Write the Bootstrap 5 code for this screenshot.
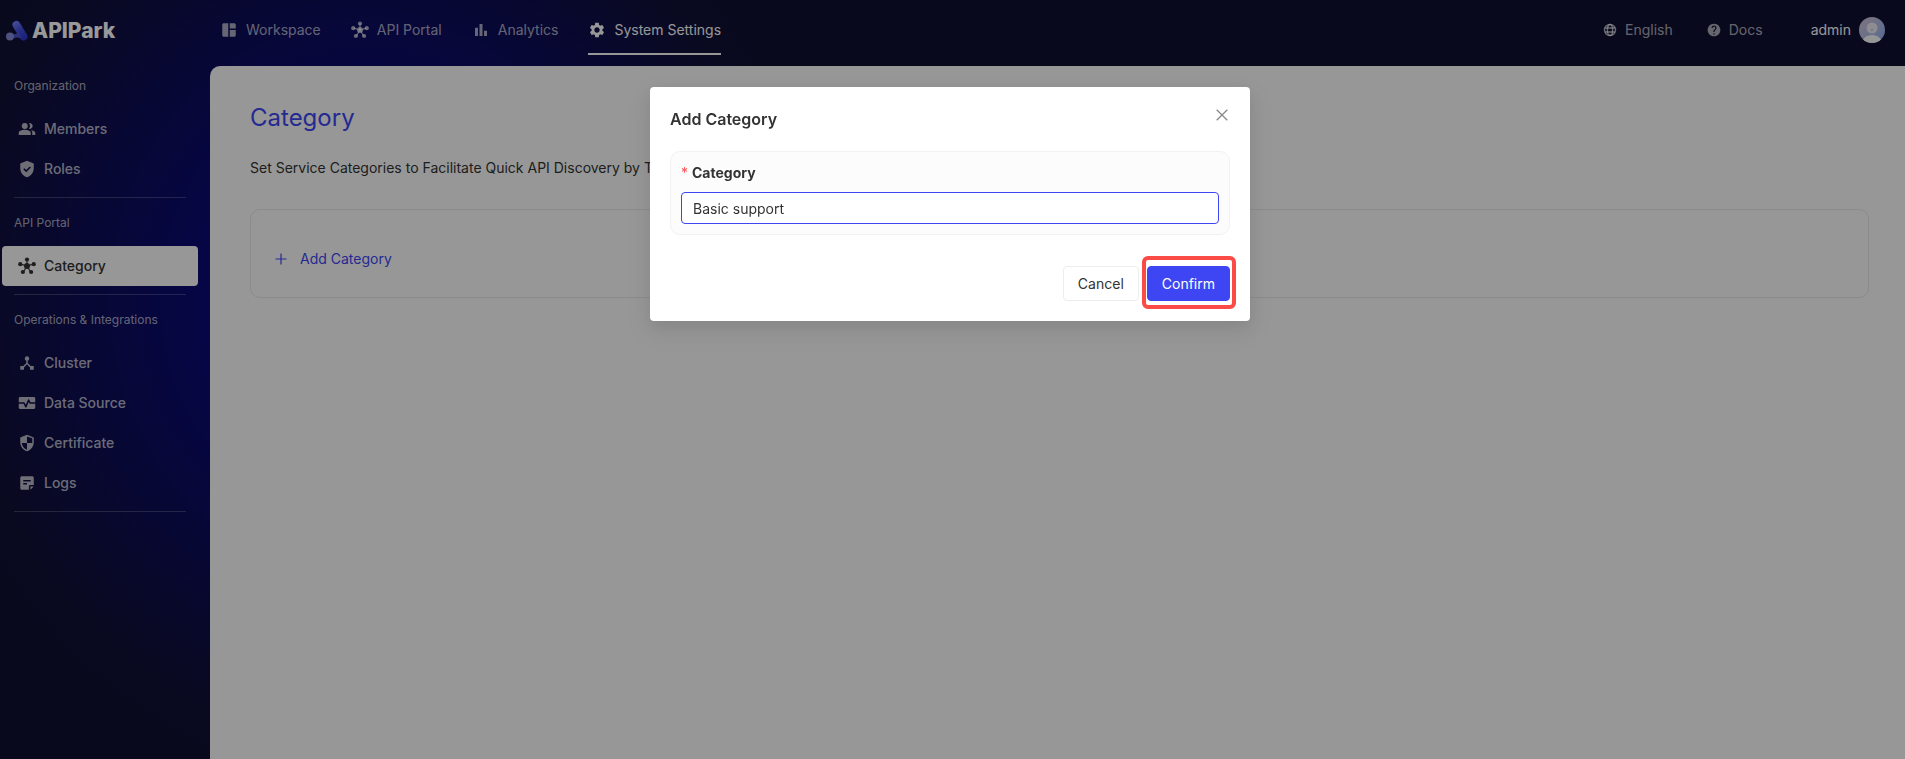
<!DOCTYPE html>
<html lang="en">
<head>
<meta charset="utf-8">
<meta name="viewport" content="width=device-width, initial-scale=1">
<title>APIPark - Category</title>
<link href="https://cdn.jsdelivr.net/npm/bootstrap@5.3.0/dist/css/bootstrap.min.css" rel="stylesheet">
<style>
  :root { --brand: #3d46f2; --ink: #333; --panel: #fcfcfc; }
  body { font-family: Inter, "Liberation Sans", sans-serif; font-size: 14px; line-height: 20px; color: var(--ink); }
  .shell { background: radial-gradient(440px 480px at 370px 300px, #0a0a80 0, #0a0a78 36%, #101034 95%, #101032 110%); }
  .shell a { text-decoration: none; }
  .sidebar { width: 210px; }
  .logo-row { height: 61px; padding: 0 0 0 5px; gap: 3px; font-size: 21px; font-weight: 800; color: #fff; }
  .group-label { font-size: 12px; padding: 15px 14px 13px; color: rgba(255,255,255,.65); }
  .side-link { height: 40px; margin: 0 12px 0 2px; padding: 0 16px; gap: 8px; border-radius: 4px; font-weight: 500; color: rgba(255,255,255,.7); }
  .side-link.active { background: var(--panel); color: var(--ink); }
  .rule { border-top: 1px solid rgba(255,255,255,.2); margin: 8px 24px 0 14px; }
  .topbar { height: 66px; padding: 0 20px 0 10px; }
  .top-links { gap: 30px; }
  .top-link { gap: 8px; height: 50px; border-bottom: 2px solid transparent; color: rgba(255,255,255,.65); padding: 5px 0 4px; margin-top: 5px; }
  .top-link.active { color: var(--panel); border-color: var(--panel); }
  .tools { gap: 34px; margin-top: -6px; color: rgba(255,255,255,.65); }
  .tools .tool { gap: 8px; color: inherit; background: none; border: 0; padding: 0; }
  .tools .user { color: var(--panel); margin-left: 14px; }
  .ico { width: 18px; height: 18px; fill: currentColor; flex: none; }
  .ico-sm { width: 14px; height: 14px; }
  .content { background: var(--panel); border-top-left-radius: 10px; padding: 36px 36px 40px 40px; }
  .page-title { font-size: 24px; line-height: 32px; font-weight: 400; color: var(--brand); margin: 0 0 24px; }
  .tree-box { border: 1px solid #e8e8e8; border-radius: 10px; margin-top: 31px; padding: 39px 24px 28px; }
  .add-link { color: var(--brand); background: none; border: 0; padding: 0; gap: 13px; }
  .modal-backdrop { --bs-backdrop-opacity: .4; }
  .modal { padding-right: 5px; }
  .modal-dialog { --bs-modal-width: 600px; margin-top: 87px; }
  .modal-content { border: 0; border-radius: 4px; padding: 20px; color: var(--ink); box-shadow: 0 6px 16px rgba(0,0,0,.08), 0 9px 28px 8px rgba(0,0,0,.05); }
  .modal-head { height: 24px; margin-bottom: 20px; }
  .modal-head h2 { font-size: 16px; line-height: 24px; font-weight: 600; margin: 0; }
  .close-btn { border: 0; background: none; color: #888; padding: 0 2px 10px; line-height: 1; }
  .field-box { background: #fcfcfc; border: 1px solid #f2f2f2; border-radius: 10px; padding: 10px; }
  .field-box label { font-weight: 700; line-height: 22px; margin-bottom: 8px; }
  .req { color: #ff4d4f; font-weight: 400; margin-right: 4px; }
  .field-box .form-control { height: 32px; font-size: 14px; line-height: 20px; padding: 5px 11px; border: 1px solid var(--brand); border-radius: 4px; color: var(--ink); box-shadow: none; }
  .modal-actions { gap: 8px; margin-top: 31px; }
  .modal-actions .btn { height: 35px; padding: 0 14px; font-size: 14px; border-radius: 4px; }
  .btn-plain { border: 1px solid #ededed; color: var(--ink); background: #fff; }
  .btn-brand { background: var(--brand); border-color: var(--brand); color: #fff; outline: 0; }
  .marked { position: relative; }
  .marked::after { content: ""; position: absolute; inset: -11px -7px -9px -6px; border: 4px solid #fa4b46; border-radius: 6px; pointer-events: none; }
</style>
</head>
<body>
<svg class="d-none" aria-hidden="true">
  <symbol id="i-hub" viewBox="0 0 24 24"><g stroke="currentColor" stroke-width="1.6"><path d="M12 12V3.5M12 12L3.5 9.5M12 12l8.500-2.500M12 12l-5 8M12 12l5 8"/></g><circle cx="12" cy="12" r="4"/><circle cx="12" cy="3.300" r="2.800"/><circle cx="3" cy="9.500" r="2.800"/><circle cx="21" cy="9.500" r="2.800"/><circle cx="6.500" cy="20" r="2.800"/><circle cx="17.500" cy="20" r="2.800"/></symbol>
  <symbol id="i-board" viewBox="0 0 24 24"><path d="M11 21H5c-1.100 0-2-.9-2-2V5c0-1.100.9-2 2-2h6v18zm2 0h6c1.100 0 2-.9 2-2v-7h-8v9zm8-11V5c0-1.100-.9-2-2-2h-6v7h8z"/></symbol>
  <symbol id="i-bars" viewBox="0 0 24 24"><path d="M4 9h4v11H4zM10 4h4v16h-4zM16 13h4v7h-4z"/></symbol>
  <symbol id="i-gear" viewBox="0 0 24 24"><path d="M19.140 12.940c.04-.3.06-.61.06-.94 0-.32-.02-.64-.07-.94l2.030-1.580c.18-.14.23-.41.12-.61l-1.920-3.320c-.12-.22-.37-.29-.59-.22l-2.390.96c-.5-.38-1.030-.7-1.620-.94l-.36-2.540c-.04-.24-.24-.41-.48-.41h-3.840c-.24 0-.43.17-.47.41l-.36 2.540c-.59.24-1.130.57-1.620.94l-2.390-.96c-.22-.08-.47 0-.59.22L2.740 8.870c-.12.21-.08.47.12.61l2.030 1.580c-.05.3-.09.63-.09.94s.02.64.07.94l-2.030 1.580c-.18.14-.23.41-.12.61l1.920 3.320c.12.22.37.29.59.22l2.390-.96c.5.38 1.030.7 1.620.94l.36 2.540c.05.24.24.41.48.41h3.840c.24 0 .44-.17.47-.41l.36-2.540c.59-.24 1.130-.56 1.620-.94l2.390.96c.22.08.47 0 .59-.22l1.920-3.320c.12-.22.07-.47-.12-.61l-2.010-1.580zM12 15.600c-1.980 0-3.600-1.620-3.600-3.600s1.620-3.600 3.600-3.600 3.600 1.620 3.600 3.600-1.620 3.600-3.600 3.600z"/></symbol>
  <symbol id="i-people" viewBox="0 0 24 24"><circle cx="9" cy="8" r="4"/><path d="M1 20v-2.800c0-1.200.6-2.100 1.600-2.600C4.500 13.600 6.700 13 9 13s4.500.6 6.400 1.600c1 .5 1.600 1.400 1.600 2.600V20zM14.500 11.900c1-1 1.500-2.400 1.500-3.900s-.5-2.800-1.500-3.900c.3-.1.7-.1 1-.1 2.200 0 4 1.800 4 4s-1.800 4-4 4c-.3 0-.7 0-1-.1zM19 20v-3c0-1.400-.7-2.700-2-3.700 1.500.2 2.800.7 4 1.300 1.300.7 2 1.500 2 2.400v3z"/></symbol>
  <symbol id="i-check" viewBox="0 0 24 24"><path fill-rule="evenodd" d="M12 1l9 3.500V11c0 5.500-3.800 10.700-9 12-5.200-1.300-9-6.500-9-12V4.500zM10.900 16.300l6.300-6.300-1.500-1.500-4.800 4.800-2.400-2.400L7 12.400z"/></symbol>
  <symbol id="i-tree" viewBox="0 0 24 24"><path d="M17 16l-4-4V8.820A3 3 0 1 0 11 8.820V12l-4 4H3v5h5v-3.050l4-4.200 4 4.200V21h5v-5z"/></symbol>
  <symbol id="i-pulse" viewBox="0 0 24 24"><path d="M15.100 7.600a1 1 0 0 0-1.800 0l-2.900 6.800-1.500-2.800a1 1 0 0 0-.9-.6H1V6c0-1.100.9-2 2-2h18c1.100 0 2 .9 2 2v5h-6.400z"/><path d="M23 13v5c0 1.100-.9 2-2 2H3c-1.100 0-2-.9-2-2v-5h6.400l2.200 4.500a1 1 0 0 0 1.800 0l2.900-6.700.8 1.600c.2.400.5.600.9.600z"/></symbol>
  <symbol id="i-shield" viewBox="0 0 24 24"><path fill-rule="evenodd" d="M12 1l9 3.500V11c0 5.500-3.800 10.700-9 12-5.200-1.300-9-6.500-9-12V4.500zM12 3.200V12H5c.5 4.100 3.300 7.800 7 8.900V12h7V5.800z"/></symbol>
  <symbol id="i-note" viewBox="0 0 24 24"><path fill-rule="evenodd" d="M19 3H5c-1.100 0-2 .9-2 2v14c0 1.100.9 2 2 2h9.500v-4.500c0-1.100.9-2 2-2H21V5c0-1.100-.9-2-2-2zM7 8h10v2H7zM7 12h5v2H7z"/><path d="M16.500 21v-4.500H21z"/></symbol>
  <symbol id="i-globe" viewBox="0 0 24 24"><g fill="none" stroke="currentColor" stroke-width="2.400"><circle cx="12" cy="12" r="9.500"/><ellipse cx="12" cy="12" rx="4.500" ry="9.500"/><path d="M3.500 8.500h17M3.500 15.500h17"/></g></symbol>
  <symbol id="i-help" viewBox="1 1 22 22"><path d="M12 2C6.480 2 2 6.480 2 12s4.480 10 10 10 10-4.480 10-10S17.520 2 12 2zm1 17h-2v-2h2v2zm2.070-7.750l-.9.920C13.450 12.900 13 13.500 13 15h-2v-.5c0-1.100.45-2.100 1.170-2.830l1.240-1.260c.37-.36.59-.86.59-1.410 0-1.100-.9-2-2-2s-2 .9-2 2H8c0-2.210 1.790-4 4-4s4 1.790 4 4c0 .88-.36 1.680-.93 2.250z"/></symbol>
</svg>

<div class="shell d-flex min-vh-100">
  <aside class="sidebar flex-shrink-0">
    <div class="logo-row d-flex align-items-center">
      <svg width="24" height="24" viewBox="0 0 24 24" aria-hidden="true">
        <defs><linearGradient id="lg" gradientUnits="userSpaceOnUse" x1="8" y1="2" x2="22" y2="22"><stop offset="0" stop-color="#7c86ff"/><stop offset=".5" stop-color="#3f4bdc"/><stop offset="1" stop-color="#2430c8"/></linearGradient></defs>
        <path d="M11.500 6L18.500 17.500" stroke="url(#lg)" stroke-width="8" stroke-linecap="round"/>
        <path d="M6 16q5-.3 8-3l2 6q-5-1.500-10 1z" fill="#4c54cf"/>
        <circle cx="5" cy="17.500" r="4" fill="#8487d2"/>
      </svg>
      <span>APIPark</span>
    </div>
    <nav aria-label="Settings">
      <div class="group-label">Organization</div>
      <a href="#" class="side-link d-flex align-items-center"><svg class="ico"><use href="#i-people"/></svg>Members</a>
      <a href="#" class="side-link d-flex align-items-center"><svg class="ico"><use href="#i-check"/></svg>Roles</a>
      <div class="rule"></div>
      <div class="group-label">API Portal</div>
      <a href="#" class="side-link active d-flex align-items-center"><svg class="ico"><use href="#i-hub"/></svg>Category</a>
      <div class="rule"></div>
      <div class="group-label">Operations &amp; Integrations</div>
      <a href="#" class="side-link d-flex align-items-center"><svg class="ico"><use href="#i-tree"/></svg>Cluster</a>
      <a href="#" class="side-link d-flex align-items-center"><svg class="ico"><use href="#i-pulse"/></svg>Data Source</a>
      <a href="#" class="side-link d-flex align-items-center"><svg class="ico"><use href="#i-shield"/></svg>Certificate</a>
      <a href="#" class="side-link d-flex align-items-center"><svg class="ico"><use href="#i-note"/></svg>Logs</a>
      <div class="rule"></div>
    </nav>
  </aside>

  <div class="d-flex flex-column flex-grow-1">
    <header class="topbar d-flex justify-content-between align-items-center">
      <nav class="top-links d-flex align-self-start" aria-label="Main">
        <a href="#" class="top-link d-flex align-items-center"><svg class="ico"><use href="#i-board"/></svg>Workspace</a>
        <a href="#" class="top-link d-flex align-items-center"><svg class="ico"><use href="#i-hub"/></svg>API Portal</a>
        <a href="#" class="top-link d-flex align-items-center"><svg class="ico"><use href="#i-bars"/></svg>Analytics</a>
        <a href="#" class="top-link active d-flex align-items-center"><svg class="ico"><use href="#i-gear"/></svg>System Settings</a>
      </nav>
      <div class="tools d-flex align-items-center">
        <button type="button" class="tool d-flex align-items-center"><svg class="ico ico-sm"><use href="#i-globe"/></svg>English</button>
        <a href="#" class="tool d-flex align-items-center"><svg class="ico ico-sm"><use href="#i-help"/></svg>Docs</a>
        <button type="button" class="tool user d-flex align-items-center">admin
          <svg width="26" height="26" viewBox="0 0 26 26" aria-hidden="true">
            <defs><linearGradient id="av" x1="0" y1="0" x2="1" y2="1"><stop offset=".2" stop-color="#c8c0d8"/><stop offset="1" stop-color="#8fb0f8"/></linearGradient><clipPath id="cp"><circle cx="13" cy="13" r="13"/></clipPath></defs>
            <g clip-path="url(#cp)"><rect width="26" height="26" fill="url(#av)"/><circle cx="13" cy="11" r="5.500" fill="#ececf2"/><ellipse cx="13" cy="25" rx="9.500" ry="7" fill="#fafafa"/><path d="M11.500 12.500h3L13 14z" fill="#9a9ccf"/></g>
          </svg>
        </button>
      </div>
    </header>
    <main class="content flex-grow-1">
      <h1 class="page-title">Category</h1>
      <div>Set Service Categories to Facilitate Quick API Discovery by Team</div>
      <div class="tree-box">
        <button type="button" class="add-link d-flex align-items-center">
          <svg width="12" height="12" viewBox="0 0 12 12" stroke="currentColor" stroke-width="1.200" aria-hidden="true"><path d="M6 .5v11M.5 6h11"/></svg>Add Category
        </button>
      </div>
    </main>
  </div>
</div>

<div class="modal-backdrop show"></div>
<div class="modal d-block" role="dialog" aria-modal="true" aria-labelledby="dlg-title">
  <div class="modal-dialog">
    <form class="modal-content">
      <div class="modal-head d-flex justify-content-between align-items-center">
        <h2 id="dlg-title">Add Category</h2>
        <button type="button" class="close-btn" aria-label="Close"><svg width="12" height="12" viewBox="0 0 12 12" stroke="currentColor" stroke-width="1.300"><path d="M.7.7l10.600 10.600M11.300.7L.7 11.300"/></svg></button>
      </div>
      <div class="field-box">
        <label for="cat" class="d-block"><span class="req">*</span>Category</label>
        <input id="cat" type="text" class="form-control" value="Basic support">
      </div>
      <div class="modal-actions d-flex justify-content-end">
        <button type="button" class="btn btn-plain">Cancel</button>
        <button type="button" class="btn btn-brand marked">Confirm</button>
      </div>
    </form>
  </div>
</div>
<script src="https://cdn.jsdelivr.net/npm/bootstrap@5.3.0/dist/js/bootstrap.bundle.min.js"></script>
</body>
</html>
